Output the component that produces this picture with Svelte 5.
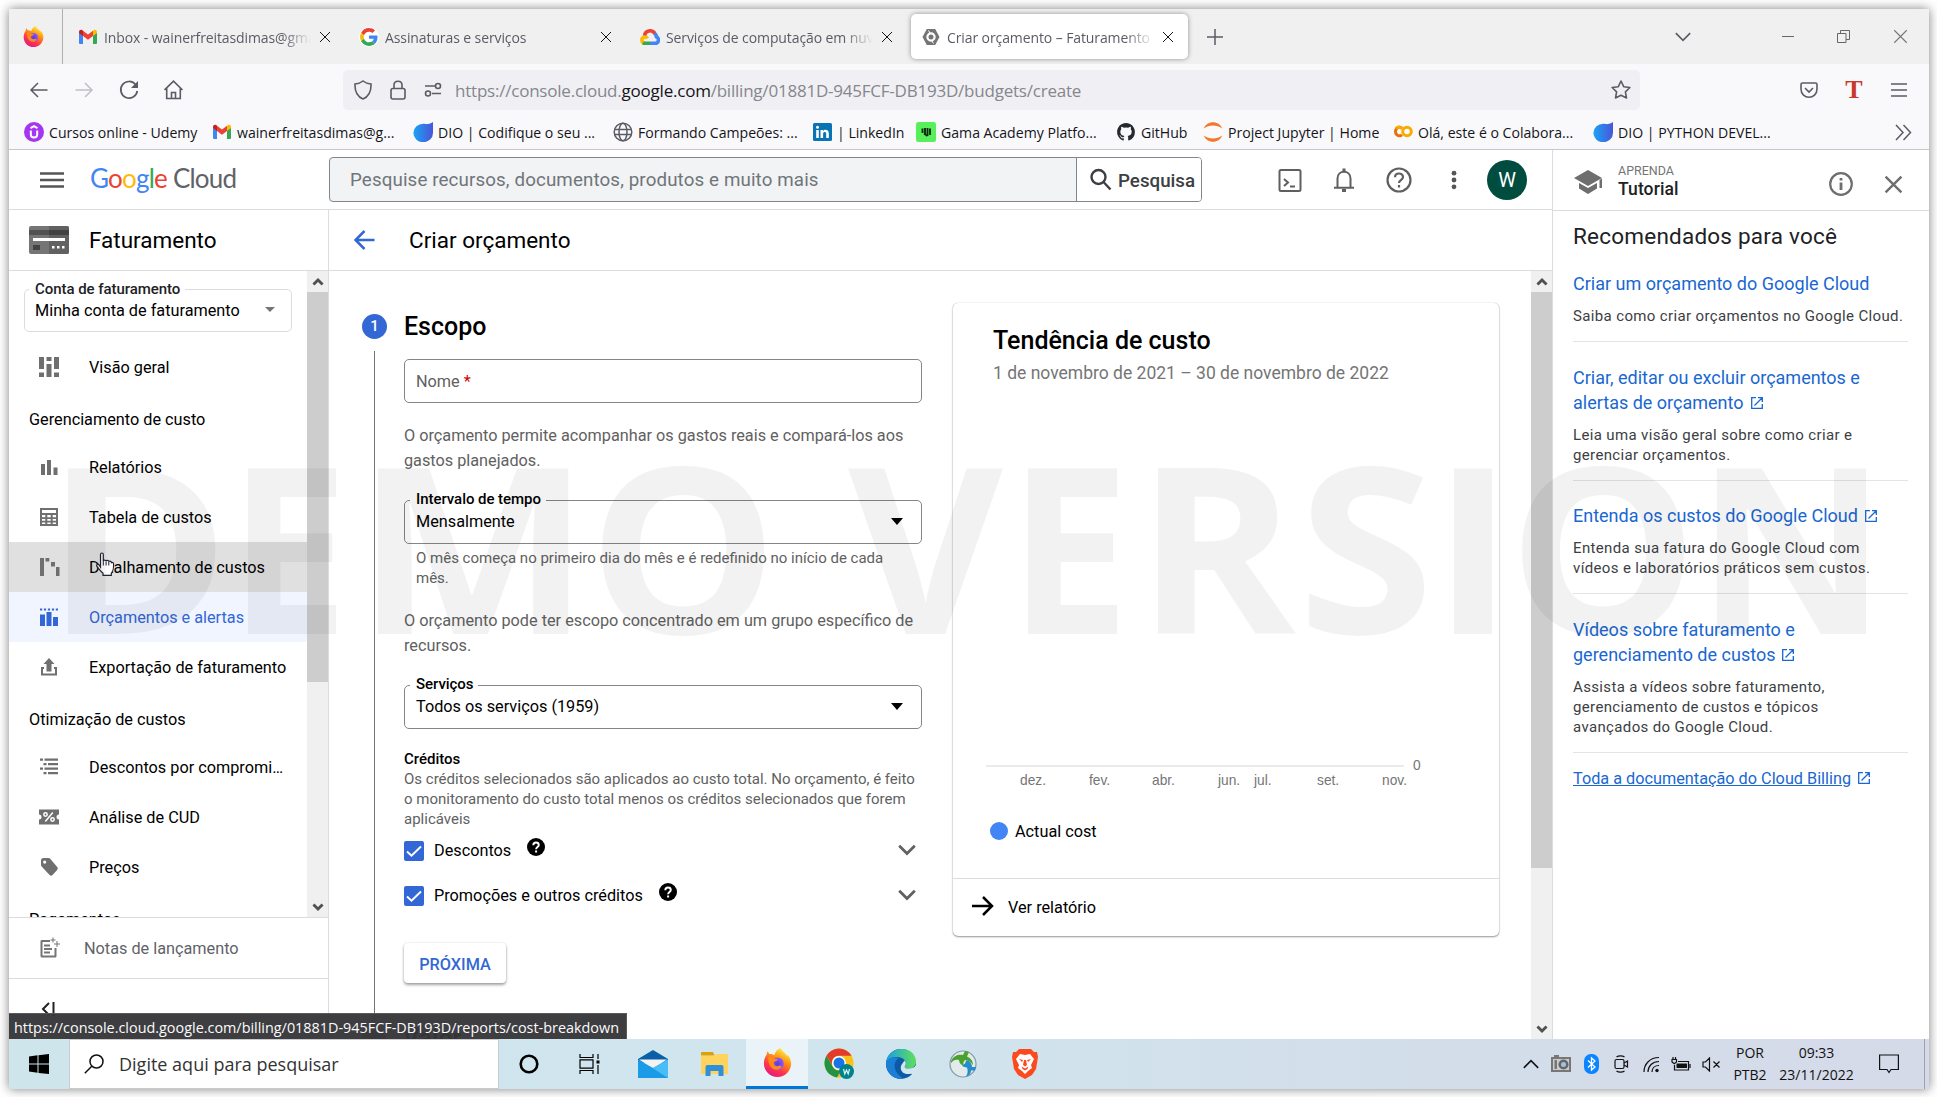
<script>
  const tabs = [
    { icon: 'gmail', title: 'Inbox - wainerfreitasdimas@gmail', active: false },
    { icon: 'google', title: 'Assinaturas e serviços', active: false },
    { icon: 'gcp', title: 'Serviços de computação em nuvem', active: false },
    { icon: 'hex', title: 'Criar orçamento – Faturamento –', active: true }
  ];

  const bookmarks = [
    ['udemy', 'Cursos online - Udemy'],
    ['gmail', 'wainerfreitasdimas@g...'],
    ['dio', 'DIO | Codifique o seu ...'],
    ['globe', 'Formando Campeões: ...'],
    ['linkedin', '| LinkedIn'],
    ['gama', 'Gama Academy Platfo...'],
    ['github', 'GitHub'],
    ['jupyter', 'Project Jupyter | Home'],
    ['colab', 'Olá, este é o Colabora...'],
    ['dio', 'DIO | PYTHON DEVEL...']
  ];

  const nav = [
    { icon: 'overview', text: 'Visão geral' },
    { heading: 'Gerenciamento de custo' },
    { icon: 'reports', text: 'Relatórios' },
    { icon: 'table', text: 'Tabela de custos' },
    { icon: 'breakdown', text: 'Detalhamento de custos', state: 'hover' },
    { icon: 'budget', text: 'Orçamentos e alertas', state: 'active' },
    { icon: 'export', text: 'Exportação de faturamento' },
    { heading: 'Otimização de custos' },
    { icon: 'commit', text: 'Descontos por compromi…' },
    { icon: 'cud', text: 'Análise de CUD' },
    { icon: 'tag', text: 'Preços' },
    { heading: 'Pagamentos' }
  ];

  const months = [
    ['dez.', 34], ['fev.', 103], ['abr.', 166], ['jun.', 232], ['jul.', 268], ['set.', 331], ['nov.', 396]
  ];

  const tutorials = [
    { lines: ['Criar um orçamento do Google Cloud'], ext: false, desc: ['Saiba como criar orçamentos no Google Cloud.'] },
    { lines: ['Criar, editar ou excluir orçamentos e', 'alertas de orçamento'], ext: true, desc: ['Leia uma visão geral sobre como criar e', 'gerenciar orçamentos.'] },
    { lines: ['Entenda os custos do Google Cloud'], ext: true, desc: ['Entenda sua fatura do Google Cloud com', 'vídeos e laboratórios práticos sem custos.'] },
    { lines: ['Vídeos sobre faturamento e', 'gerenciamento de custos'], ext: true, desc: ['Assista a vídeos sobre faturamento,', 'gerenciamento de custos e tópicos', 'avançados do Google Cloud.'] }
  ];

  // Watermark letters: left edge and drawn width in px, then the glyph's
  // side bearing, ink width and advance in font units (2048 per em).
  const MARK_SIZE = 232;
  const mark = [
    ['D', 59, 148, 184, 1217, 1516],
    ['E', 239, 99, 184, 946, 1147],
    ['M', 369, 190, 184, 1560, 1931],
    ['O', 593, 162, 119, 1394, 1632],
    ['V', 839, 155, 0, 1331, 1331],
    ['E', 1019, 100, 184, 946, 1147],
    ['R', 1149, 138, 184, 1168, 1352],
    ['S', 1300, 115, 94, 953, 1128],
    ['I', 1445, 38, 184, 310, 678],
    ['O', 1513, 162, 119, 1394, 1632],
    ['N', 1708, 149, 184, 1295, 1665]
  ].map(([ch, left, width, bearing, ink, advance]) => {
    const perUnit = width / ink;
    return { ch, x: left - bearing * perUnit, length: advance * perUnit };
  });
</script>

{#snippet firefox(size)}
  <svg width={size} height={size} viewBox="0 0 32 32">
    <defs>
      <linearGradient id="ffBody" x1=".8" y1=".05" x2=".3" y2="1">
        <stop offset="0" stop-color="#fff44f" /><stop offset=".35" stop-color="#ff980e" />
        <stop offset=".7" stop-color="#ff3647" /><stop offset="1" stop-color="#e31587" />
      </linearGradient>
      <radialGradient id="ffCore"><stop offset="0" stop-color="#5b3bd8" /><stop offset="1" stop-color="#9059ff" /></radialGradient>
    </defs>
    <path fill="url(#ffBody)" d="M19.5 0c1 3 3.500 4.500 5.500 6.500 1.200 1.200 1.600 2 1.600 2l1-.7C29.500 10.500 31 13.500 31 17c0 8.300-6.700 15-15 15S1 25.300 1 17c0-4.500 1.500-7.500 3-9.500 0-1.500.8-3.500 1.500-4.300.2 1.400.9 2.600 1.700 3.400 2.300-.3 4 .4 5.300 1.400C13.500 4 16 1 19.500 0z" />
    <circle cx="16" cy="17.500" r="7" fill="url(#ffCore)" />
    <path fill="#ff8a16" d="M6 10c3-.5 5 .5 6.500 2 1.500-.3 3 0 4 .8-1 1.700-3.500 1.700-4.500 3.200-.5 3 2 4.500 4.500 4 2-.4 3.500-.5 4 .5-1.500 3.500-6 4.500-9.500 2.500S5.500 16 6 10z" />
  </svg>
{/snippet}

{#snippet favicon(name)}
  {#if name === 'gmail'}
    <svg width="20" height="20" viewBox="0 0 20 20"><path fill="#4285f4" d="M1 5v11a1 1 0 0 0 1 1h3V8z" /><path fill="#34a853" d="M19 5v11a1 1 0 0 1-1 1h-3V8z" /><path fill="#c5221f" d="M1 5.500V5c0-1.800 2-2.800 3.400-1.700L5 3.700V9L1 6z" /><path fill="#fbbc04" d="M19 5.500V5c0-1.800-2-2.800-3.400-1.700l-.6.4V9l4-3z" /><path fill="#ea4335" d="M5 3.700l5 3.800 5-3.800V9l-5 3.800L5 9z" /></svg>
  {:else if name === 'google'}
    <svg width="20" height="20" viewBox="-3 -3 54 54"><circle cx="24" cy="24" r="27" fill="#fff" /><path fill="#ea4335" d="M24 9.500c3.500 0 6.700 1.200 9.200 3.600l6.900-6.900C35.900 2.400 30.500 0 24 0 14.600 0 6.500 5.400 2.600 13.200l8 6.200C12.400 13.700 17.700 9.500 24 9.500z" /><path fill="#4285f4" d="M47 24.600c0-1.600-.2-3.100-.4-4.600H24v9h12.900c-.6 3-2.200 5.500-4.700 7.200l7.700 6C44.400 38 47 31.800 47 24.600z" /><path fill="#fbbc05" d="M10.500 28.600a14.500 14.500 0 0 1 0-9.200l-8-6.200a24 24 0 0 0 0 21.600z" /><path fill="#34a853" d="M24 48c6.500 0 11.900-2.100 15.900-5.800l-7.700-6c-2.200 1.400-4.900 2.300-8.200 2.300-6.300 0-11.600-4.200-13.500-9.900l-8 6.200C6.500 42.600 14.600 48 24 48z" /></svg>
  {:else if name === 'gcp'}
    <svg width="20" height="20" viewBox="0 0 20 20" fill="none" stroke-width="3.600"><path stroke="#fbbc05" d="M7.500 11.500A3 3 0 1 0 5 16" /><path stroke="#34a853" d="M3 15.700c.6.400 1.300.6 2 .6h5" /><path stroke="#4285f4" d="M10 16.300h5c4 0 4.600-5 1.500-6.400C16.200 8 15 6.500 14 5.700" /><path stroke="#ea4335" d="M4.500 8.500C5.300 3.500 11.500 2 14.800 6.300" /></svg>
  {:else if name === 'hex'}
    <svg width="20" height="20" viewBox="0 0 20 20"><path fill="#757575" fill-rule="evenodd" d="M5.800 2h8.400L18.500 10l-4.300 8H5.800L1.500 10zM10 5.300a4.700 4.700 0 1 0 0 9.400 4.700 4.700 0 0 0 0-9.400z" /><circle cx="10" cy="10" r="2.500" fill="#757575" /><path stroke="#fff" stroke-width="1" d="M7.500 3.500 9 6M12.500 16.500 11 14" /></svg>
  {:else if name === 'udemy'}
    <svg width="20" height="20" viewBox="0 0 20 20"><circle cx="10" cy="10" r="10" fill="#a435f0" /><path fill="none" stroke="#fff" stroke-width="2" d="M6.800 8.500v4c0 4 6.400 4 6.400 0v-4M6.500 6.200 10 4.200l3.500 2" /></svg>
  {:else if name === 'dio'}
    <svg width="20" height="20" viewBox="0 0 20 20"><defs><linearGradient id="dio"><stop offset="0" stop-color="#1aa4f5" /><stop offset="1" stop-color="#4a55d8" /></linearGradient></defs><path fill="url(#dio)" d="M20 0v11a9.800 9.200 0 1 1-9.500-9.200c2 0 3 .6 4.500.3C17 1.700 18.500 1 20 0z" /></svg>
  {:else if name === 'globe'}
    <svg width="20" height="20" viewBox="0 0 20 20" fill="none" stroke="#5b5b66" stroke-width="1.500"><circle cx="10" cy="10" r="8.800" /><ellipse cx="10" cy="10" rx="4" ry="8.800" /><path d="M1.500 7.500h17M1.500 12.500h17" /></svg>
  {:else if name === 'linkedin'}
    <svg width="20" height="20" viewBox="0 0 20 20"><rect x="1" y="1" width="19" height="18" rx="1.500" fill="#0a73b1" /><path fill="#fff" d="M4.200 8h2.600v8H4.200zM8.500 8H11v1.200C12.300 7 16.800 7.300 16.800 11.300V16h-2.600v-4.300c0-2.400-3.100-2.200-3.100 0V16H8.500z" /><circle cx="5.500" cy="5.200" r="1.500" fill="#fff" /></svg>
  {:else if name === 'gama'}
    <svg width="20" height="20" viewBox="0 0 20 20"><rect width="20" height="20" rx="2.500" fill="#57f05a" /><path stroke="#0b2b0c" stroke-width="1.900" d="M6.500 6.500v4.500M9 6v6.500M11.500 6v8M14 6.500v6.500" /><path stroke="#0b2b0c" stroke-width="1.700" d="M8 11.500l3.500 2.500" /></svg>
  {:else if name === 'github'}
    <svg width="20" height="20" viewBox="-1 -1 18 18"><path fill="#24292f" d="M8 0C3.580 0 0 3.580 0 8c0 3.540 2.290 6.530 5.470 7.590.4.070.55-.17.55-.38 0-.19-.01-.82-.01-1.490-2.010.37-2.530-.49-2.690-.94-.09-.23-.48-.94-.82-1.130-.28-.15-.68-.52-.01-.53.63-.01 1.080.58 1.230.82.72 1.210 1.870.87 2.330.66.070-.52.28-.87.51-1.070-1.780-.2-3.640-.89-3.640-3.950 0-.87.31-1.590.82-2.150-.08-.2-.36-1.020.08-2.120 0 0 .67-.21 2.200.82a7.600 7.600 0 0 1 4 0c1.530-1.040 2.200-.82 2.200-.82.44 1.100.16 1.920.08 2.120.51.56.82 1.270.82 2.150 0 3.070-1.870 3.750-3.650 3.950.29.25.54.73.54 1.480 0 1.070-.01 1.930-.01 2.200 0 .21.15.46.55.38A8 8 0 0 0 16 8c0-4.420-3.580-8-8-8z" /></svg>
  {:else if name === 'jupyter'}
    <svg width="20" height="20" viewBox="0 0 20 20" fill="#f37726"><path d="M.8 6.500c3-8.300 15.400-8.300 18.400 0-4.800-4-13.600-4-18.400 0zM.8 13.500c3 8.300 15.400 8.300 18.400 0-4.800 4-13.600 4-18.400 0z" /></svg>
  {:else if name === 'colab'}
    <svg width="20" height="20" viewBox="0 0 20 20" fill="none" stroke-width="3"><path stroke="#e8710a" d="M9 6.300a4 4.200 0 1 0 0 6.500" /><circle cx="14" cy="9.500" r="4.300" stroke="#f9ab00" /><path stroke="#f9ab00" d="M3 6.500c1.500-1.600 3.800-1.800 6-.2" /></svg>
  {/if}
{/snippet}

{#snippet navIcon(name)}
  <svg width="24" height="24" viewBox="0 0 24 24" fill="currentColor">
    {#if name === 'overview'}
      <path d="M2 2h5v12H2zM2 17.500h5V22H2zM9.500 2h5v4h-5zM9.500 9h5v13h-5zM17 2h5v12h-5zM17 17.500h5V22h-5z" />
    {:else if name === 'reports'}
      <path d="M4 9h4v11H4zM10 5h4v15h-4zM16.500 12.500h4V20h-4z" />
    {:else if name === 'table'}
      <path fill-rule="evenodd" d="M3 3h18v18H3zM5 5v3h14V5zM5 10v2.300h3.300V10zm5.300 0v2.300h3.400V10zm5.400 0v2.300H19V10zM5 14v1.800h3.300V14zm5.300 0v1.800h3.400V14zm5.400 0v1.800H19V14zM5 17.500V19h3.300v-1.500zm5.300 0V19h3.400v-1.500zm5.400 0V19H19v-1.500z" />
    {:else if name === 'breakdown'}
      <path d="M3 3h4v18H3zM8.500 3h3.800v3.500H8.500zM14 7h4v4.500h-4zM19 12h3.500v9H19z" />
    {:else if name === 'budget'}
      <path d="M3 9.500h5V21H3zM9.500 7h5v14h-5zM16 12h5v9h-5zM3 3.500h2.200v2H3zM6.900 3.500h2.200v2H6.900zM10.900 3.500h2.200v2h-2.200zM14.900 3.500h2.200v2h-2.200zM18.800 3.500H21v2h-2.200z" />
    {:else if name === 'export'}
      <path d="M12 3l5.500 6H14.500v7.500h-5V9H6.500zM4 12h3v2H6v4.500h12V14h-1v-2h3v8.500H4z" />
    {:else if name === 'commit'}
      <path d="M3 3.500h3v2.200H3zM7.500 3.500H21v2.200H7.500zM6.500 8h3v2.200h-3zM11 8h10v2.200H11zM3 12.500h3v2.200H3zM7.500 12.500H21v2.200H7.500zM6.500 17h3v2.200h-3zM11 17h10v2.200H11z" />
    {:else if name === 'cud'}
      <path d="M2 4.500h20v5a2.500 2.500 0 0 0 0 5v5H2v-5a2.500 2.500 0 0 0 0-5z" />
      <g fill="none" stroke="#fff" stroke-width="1.500"><circle cx="8.500" cy="9.500" r="1.700" /><circle cx="15.500" cy="14.500" r="1.700" /><path d="M15.800 7.500l-7.500 9" /></g>
    {:else if name === 'tag'}
      <path fill-rule="evenodd" d="M4 5.500C4 4 5 3 6.500 3h5c.7 0 1.300.3 1.700.8l7 8.200c.8 1 .7 2.200-.1 3l-4.600 5c-.8.900-2 .9-2.900 0l-8-8.600c-.4-.4-.6-1-.6-1.600zM7.700 5.500a1.600 1.600 0 1 0 0 3.200 1.600 1.600 0 0 0 0-3.200z" />
    {:else if name === 'notes'}
      <path fill-rule="evenodd" d="M5 4h8v2H5.500v13.500h12V12h2v8c0 1-.7 1.500-1.500 1.500H5c-1 0-1.500-.7-1.500-1.500V5.500C3.500 4.700 4 4 5 4zM7 8.500h6v1.900H7zM7 12h8v1.900H7zM7 15.500h6v1.900H7zM15.500 1.500h1v2h2v1h-2v2h-1v-2h-2v-1h2zM19.500 5h1v2.500H23v1h-2.500V11h-1V8.500H17v-1h2.500z" />
    {/if}
  </svg>
{/snippet}

{#snippet chevron(dir, size, color, weight)}
  <svg width={size} height={size} viewBox="0 0 20 20" fill="none" stroke={color} stroke-width={weight}>
    {#if dir === 'up'}<path d="M3.500 13.500 10 7l6.500 6.500" />{:else}<path d="M3.500 6.500 10 13l6.500-6.500" />{/if}
  </svg>
{/snippet}

{#snippet cross(size, color, weight)}
  <svg width={size} height={size} viewBox="0 0 12 12" stroke={color} stroke-width={weight}><path d="M1 1l10 10M11 1 1 11" /></svg>
{/snippet}

{#snippet external()}
  <svg class="ext" width="12" height="12" viewBox="0 0 12 12" fill="none" stroke="#1967d2" stroke-width="1.300"><path d="M5 .7H.7v10.600h10.600V7M7 .7h4.300V5M11 1 3.500 8.500" /></svg>
{/snippet}

{#snippet helpDot()}
  <svg width="18" height="18" viewBox="0 0 18 18"><circle cx="9" cy="9" r="9" fill="#000" /><path fill="none" stroke="#fff" stroke-width="1.900" d="M6.300 7.200C6.300 3.600 11.800 3.800 11.800 7c0 2-2.700 2.200-2.700 4.300" /><path fill="#fff" d="M8.100 12.500h2v2h-2z" /></svg>
{/snippet}

{#snippet scrollArrow(dir)}
  <div class="sb-btn">{@render chevron(dir, 14, '#505050', 4)}</div>
{/snippet}

<div class="window">
  <div class="tabstrip">
    <div class="pinned">{@render firefox(21)}</div>
    {#each tabs as tab}
      <div class="tab" class:active={tab.active}>
        {@render favicon(tab.icon)}
        <span class="tab-title">{tab.title}</span>
        {@render cross(12, '#15141a', 1)}
      </div>
    {/each}
    <svg class="plus" width="16" height="16" viewBox="0 0 16 16" stroke="#5b5b66" stroke-width="1.500"><path d="M8 0v16M0 8h16" /></svg>
    <div class="wincontrols">
      {@render chevron('down', 22, '#5b5b66', 1.500)}
      <svg width="12" height="12" viewBox="0 0 12 12" stroke="#666"><path d="M0 5.500h12" /></svg>
      <svg width="13" height="13" viewBox="0 0 13 13" stroke="#666" fill="none"><path d="M.5 3.500h8.500v9H.5zM3.500 3.500v-3h9v9H9" /></svg>
      {@render cross(15, '#777', 0.900)}
    </div>
  </div>

  <div class="navbar">
    <div class="nav-buttons">
      <svg width="20" height="20" viewBox="0 0 20 20" fill="none" stroke="#5b5b66" stroke-width="1.500"><path d="M18.500 10H2M9 3l-7 7 7 7" /></svg>
      <svg width="20" height="20" viewBox="0 0 20 20" fill="none" stroke="#bfbfc5" stroke-width="1.500"><path d="M1.500 10H18M11 3l7 7-7 7" /></svg>
      <svg width="20" height="20" viewBox="0 0 20 20" fill="none" stroke="#5b5b66" stroke-width="1.700"><path d="M16.500 4.500A8.300 8.300 0 1 0 18.300 11" /><path fill="#5b5b66" stroke="none" d="M19 1v7h-7z" /></svg>
      <svg width="20" height="20" viewBox="0 0 20 20" fill="none" stroke="#5b5b66" stroke-width="1.600"><path d="M.5 10l9-8.800 9 8.800M2.700 8v10.500h13.600V8M7.500 18v-5.500h4V18" /></svg>
    </div>
    <div class="urlbar">
      <svg width="20" height="20" viewBox="0 0 20 20" fill="none" stroke="#5b5b66" stroke-width="1.600"><path d="M10 1c2.500 2 5 2.800 8 3 .3 7-2 12.500-8 15C4 16.500 1.700 11 2 4c3-.2 5.500-1 8-3z" /></svg>
      <svg width="20" height="20" viewBox="0 0 20 20" fill="none" stroke="#5b5b66" stroke-width="1.600"><rect x="3" y="8.500" width="14" height="10.500" rx="2" /><path d="M6 8.500V5c0-5 8-5 8 0v3.500" /></svg>
      <svg width="20" height="20" viewBox="0 0 20 20" fill="none" stroke="#5b5b66" stroke-width="1.600"><path d="M2 6h10M9 13.500h9" /><circle cx="15" cy="6" r="2.500" /><circle cx="5" cy="13.500" r="2.500" /></svg>
      <span class="url">https://console.cloud.<b>google.com</b>/billing/01881D-945FCF-DB193D/budgets/create</span>
      <svg width="20" height="20" viewBox="0 0 20 20" fill="none" stroke="#5b5b66" stroke-width="1.600" stroke-linejoin="round"><path d="M10 1l2.700 5.700 6.200.8-4.500 4.300 1.100 6.200L10 15.200 4.500 18l1.100-6.200L1.100 7.500l6.200-.8z" /></svg>
    </div>
    <div class="nav-right">
      <svg width="18" height="18" viewBox="0 0 18 18" fill="none" stroke="#5b5b66" stroke-width="1.600"><path d="M2.500 2h13c.8 0 1.500.6 1.500 1.500V8c0 11-16 11-16 0V3.500C1 2.600 1.700 2 2.500 2zM5 7l4 4 4-4" /></svg>
      <span class="tee">T</span>
      <svg width="16" height="14" viewBox="0 0 16 14" stroke="#5b5b66" stroke-width="1.500"><path d="M0 1h16M0 7h16M0 13h16" /></svg>
    </div>
  </div>

  <div class="bookmarks">
    {#each bookmarks as [icon, label]}
      <div class="bookmark">{@render favicon(icon)}<span>{label}</span></div>
    {/each}
    <svg class="more" width="17" height="17" viewBox="0 0 17 17" fill="none" stroke="#5b5b66" stroke-width="1.500"><path d="M1 1l7 7.500L1 16M8.500 1l7 7.500-7 7.500" /></svg>
  </div>

  <div class="page">
    <div class="console">
      <header class="topbar">
        <svg class="burger" width="24" height="16" viewBox="0 0 24 16" stroke="#555" stroke-width="2.400"><path d="M0 1.500h24M0 8h24M0 14.500h24" /></svg>
        <div class="logo"><span class="b">G</span><span class="r">o</span><span class="y">o</span><span class="b">g</span><span class="g">l</span><span class="r">e</span><span class="cloud">Cloud</span></div>
        <div class="search">
          <span class="placeholder">Pesquise recursos, documentos, produtos e muito mais</span>
          <div class="search-btn">
            <svg width="24" height="24" viewBox="0 0 24 24" fill="none" stroke="#3c4043" stroke-width="2.400"><circle cx="9.500" cy="9" r="7" /><path d="M14.500 14l7 7.500" /></svg>
            <span>Pesquisa</span>
          </div>
        </div>
        <div class="top-icons">
          <svg width="24" height="24" viewBox="0 0 24 24" fill="none" stroke="#5f5f5f" stroke-width="2"><rect x="1.500" y="2" width="21" height="21" rx="1.500" /><path d="M6 11l4 3.500L6 18M12 18.500h5" /></svg>
          <svg width="24" height="24" viewBox="0 0 24 24" fill="none" stroke="#5f5f5f" stroke-width="2"><path d="M5.500 19.500v-9c0-9 13-9 13 0v9M2 19.800h20" /><path stroke-width="3" d="M12 .5v3M10 22.500h4" /></svg>
          <svg width="26" height="26" viewBox="0 0 26 26" fill="none" stroke="#5f5f5f" stroke-width="2.200"><circle cx="13" cy="13" r="11.500" /><path d="M9 10.300c0-5 8-5 8-.3 0 3-4 3.200-4 6" /><path d="M13 18v2.500" /></svg>
          <svg width="24" height="24" viewBox="0 0 24 24" fill="#555"><circle cx="12" cy="5.200" r="2.400" /><circle cx="12" cy="12" r="2.400" /><circle cx="12" cy="18.800" r="2.400" /></svg>
          <div class="avatar">W</div>
        </div>
      </header>

      <div class="body">
        <aside class="sidebar">
          <div class="side-head">
            <svg width="40" height="28" viewBox="0 0 40 28"><rect width="40" height="28" rx="2" fill="#757575" /><path fill="#616161" d="M20 0h18a2 2 0 0 1 2 2v24a2 2 0 0 1-2 2H20z" /><path fill="#525252" d="M0 4h20v5H0z" /><path fill="#424242" d="M20 4h20v5H20zM4 19h7v5H4z" /><path fill="#fff" d="M4 12h32v3H4zM23 20h2.500v2.500H23zM28 20h2.500v2.500H28zM33 20h2.500v2.500H33z" /></svg>
            <span>Faturamento</span>
          </div>
          <div class="side-scroll">
            <div class="side-list">
              <fieldset class="account">
                <legend>Conta de faturamento</legend>
                <div class="field-value">Minha conta de faturamento<i class="caret small"></i></div>
              </fieldset>
              {#each nav as item}
                {#if item.heading}
                  <div class="nav-heading">{item.heading}</div>
                {:else}
                  <div class="nav-item {item.state ?? ''}">{@render navIcon(item.icon)}<span>{item.text}</span></div>
                {/if}
              {/each}
            </div>
            <div class="scrollbar">
              {@render scrollArrow('up')}
              <div class="thumb side"></div>
              {@render scrollArrow('down')}
            </div>
          </div>
          <div class="notes">{@render navIcon('notes')}<span>Notas de lançamento</span></div>
          <div class="collapse">
            <svg width="14" height="16" viewBox="0 0 14 16" fill="none" stroke="#222" stroke-width="2"><path d="M8 2 2 8l6 6M12.500 1v14" /></svg>
          </div>
        </aside>

        <section class="main">
          <div class="main-head">
            <svg width="22" height="20" viewBox="0 0 22 20" fill="none" stroke="#3367d6" stroke-width="2.500"><path d="M20.500 10H1.500M10.500 1l-9 9 9 9" /></svg>
            <span>Criar orçamento</span>
          </div>
          <div class="main-scroll">
            <div class="steps">
              <div class="rail"><div class="badge">1</div><div class="line"></div></div>
              <div class="form">
                <h2>Escopo</h2>
                <div class="input">Nome&nbsp;<em>*</em></div>
                <p class="para first">O orçamento permite acompanhar os gastos reais e compará-los aos<br />gastos planejados.</p>
                <fieldset class="select">
                  <legend>Intervalo de tempo</legend>
                  <div class="field-value">Mensalmente<i class="caret"></i></div>
                </fieldset>
                <p class="hint">O mês começa no primeiro dia do mês e é redefinido no início de cada<br />mês.</p>
                <p class="para second">O orçamento pode ter escopo concentrado em um grupo específico de<br />recursos.</p>
                <fieldset class="select">
                  <legend>Serviços</legend>
                  <div class="field-value">Todos os serviços (1959)<i class="caret"></i></div>
                </fieldset>
                <h3>Créditos</h3>
                <p class="credits">Os créditos selecionados são aplicados ao custo total. No orçamento, é feito<br />o monitoramento do custo total menos os créditos selecionados que forem<br />aplicáveis</p>
                <div class="checks">
                  {#each ['Descontos', 'Promoções e outros créditos'] as label}
                    <div class="check-row">
                      <svg width="20" height="20" viewBox="0 0 20 20"><rect width="20" height="20" rx="2" fill="#3367d6" /><path fill="none" stroke="#fff" stroke-width="1.900" d="M3 10.500l4.500 4.300L17 5.500" /></svg>
                      <span>{label}</span>
                      <div class="help">{@render helpDot()}</div>
                      <div class="expand">{@render chevron('down', 24, '#616161', 2.300)}</div>
                    </div>
                  {/each}
                </div>
                <button>PRÓXIMA</button>
              </div>
            </div>

            <div class="card">
              <h2>Tendência de custo</h2>
              <div class="period">1 de novembro de 2021 – 30 de novembro de 2022</div>
              <div class="chart">
                <div class="axis"><div class="axis-line"></div><span>0</span></div>
                <div class="ticks">
                  {#each months as [m, x]}<span class="tick" style="left: {x}px">{m}</span>{/each}
                </div>
              </div>
              <div class="legend"><i></i>Actual cost</div>
              <div class="report">
                <svg width="22" height="20" viewBox="0 0 22 20" fill="none" stroke="#000" stroke-width="2.500"><path d="M0 10h19M11 1l9 9-9 9" /></svg>
                <span>Ver relatório</span>
              </div>
            </div>

            <div class="scrollbar main-sb">
              {@render scrollArrow('up')}
              <div class="thumb content"></div>
              {@render scrollArrow('down')}
            </div>
          </div>
        </section>
      </div>
    </div>

    <aside class="learn">
      <div class="learn-head">
        <svg width="28" height="24" viewBox="0 0 28 24" fill="#6e6e6e"><path d="M14 0 28 8 14 16 0 8zM5 13l9 5 9-5v5.500L14 24l-9-5.500zM25.500 10 28 8.500V18h-2.500z" /></svg>
        <div class="learn-title"><small>APRENDA</small><strong>Tutorial</strong></div>
        <svg class="info" width="24" height="24" viewBox="0 0 24 24" fill="none" stroke="#6e6e6e" stroke-width="2.200"><circle cx="12" cy="12" r="10.800" /><path stroke-width="2.800" d="M12 10.500V18M12 6v2.500" /></svg>
        <div class="close">{@render cross(19, '#6e6e6e', 1.500)}</div>
      </div>
      <h2>Recomendados para você</h2>
      {#each tutorials as t}
        <div class="tut">
          <a href="#top">{#each t.lines as line, i}{#if i}<br />{/if}{line}{/each}{#if t.ext}{@render external()}{/if}</a>
          <p>{#each t.desc as line, i}{#if i}<br />{/if}{line}{/each}</p>
        </div>
      {/each}
      <div class="docs"><a href="#docs">Toda a documentação do Cloud Billing</a>{@render external()}</div>
    </aside>

    <div class="next-step"><i></i><span>Valor</span></div>
    <div class="status">https://console.cloud.google.com/billing/01881D-945FCF-DB193D/reports/cost-breakdown</div>
    <svg class="cursor" width="20" height="25" viewBox="0 0 20 25"><path fill="#fff" stroke="#223" stroke-width="1.200" d="M5.500 15V2.500c0-2 2.800-2 2.800 0V9c0-1.200 2.600-1.300 2.800.3 0-1.200 2.500-1.200 2.700.5.200-1.200 2.600-1 2.600.8 1.400-.5 2.200.3 2.200 1.500 0 6-.6 7-2.300 9.200v2H8v-2C6 19.500 4.500 17.500 2 14.500c-1.200-1.500.8-3 2-1.700z" /><path stroke="#223" d="M8.300 9v4.500M11.100 9.500v4M13.800 10v3.500" /></svg>
  </div>

  <footer class="taskbar">
    <div class="start"><svg width="20" height="20" viewBox="0 0 20 20"><path d="M0 2.500 8.500 1.300V9.500H0zM9.500 1.200 20 0v9.500H9.500zM0 10.500h8.500v8.300L0 17.500zM9.500 10.500H20V20L9.500 18.900z" /></svg></div>
    <div class="tb-search">
      <svg width="20" height="20" viewBox="0 0 20 20" fill="none" stroke="#111" stroke-width="1.500"><circle cx="12.500" cy="7.500" r="6.500" /><path d="M8 12 .8 19.200" /></svg>
      <span>Digite aqui para pesquisar</span>
    </div>
    <div class="apps">
      <div class="app"><svg width="20" height="20" viewBox="0 0 20 20"><circle cx="10" cy="10" r="8.300" fill="none" stroke="#000" stroke-width="2.600" /></svg></div>
      <div class="app taskview"><svg width="21" height="20" viewBox="0 0 21 20" fill="none" stroke="#000" stroke-width="1.200"><path d="M1 0v3.500h13V0M1 20v-3.500h13V20M1 5.800h13v8.400H1zM19 0v5M19 11v9" /><path fill="#000" stroke="none" d="M17.500 6.500h3v3h-3z" /></svg></div>
      <div class="app"><svg width="30" height="28" viewBox="0 0 30 28"><path fill="#0a5fa8" d="M15 0 30 9v4H0V9z" /><path fill="#f3f3f3" d="M1 9.500h28L15 19z" /><path fill="#1a9be8" d="M0 9.500 15 18l15-8.500V28H0z" /><path fill="#49bdf5" d="M30 9.500V28L12 16.500l3 1.500z" /></svg></div>
      <div class="app"><svg width="28" height="24" viewBox="0 0 28 24"><path fill="#e0a100" d="M0 1a1 1 0 0 1 1-1h11l1.500 3.500H0z" /><path fill="#ffd45e" d="M0 4h13l2-2h12v20H0z" /><path fill="#2f8fd8" d="M4.500 24v-9a2 2 0 0 1 2-2h14a2 2 0 0 1 2 2v9h-5v-5h-8v5z" /></svg></div>
      <div class="app current">{@render firefox(29)}</div>
      <div class="app"><svg width="32" height="32" viewBox="0 0 32 32"><circle cx="16" cy="15" r="14.500" fill="#fbc116" /><path fill="#e33b2e" d="M3.500 7.700a14.500 14.500 0 0 1 25 0H16a7 7 0 0 0-6.500 10z" /><path fill="#229342" d="M3.500 7.700l6.300 11A7 7 0 0 0 18 22l-4 7.500A14.500 14.500 0 0 1 3.500 7.700z" /><circle cx="16" cy="15" r="7" fill="#fff" /><circle cx="16" cy="15" r="5.500" fill="#1a73e8" /><circle cx="23.500" cy="23.500" r="7.500" fill="#00838f" /><path fill="none" stroke="#d8f3f3" stroke-width="1.200" d="M20.500 21l1.300 5 1.700-4 1.700 4 1.300-5" /></svg></div>
      <div class="app"><svg width="30" height="30" viewBox="0 0 30 30"><defs><linearGradient id="edgeTop"><stop offset="0" stop-color="#1b9de2" /><stop offset="1" stop-color="#5fe05a" /></linearGradient></defs><circle cx="15" cy="15" r="15" fill="#0c59a4" /><path fill="url(#edgeTop)" d="M0 14C1-4 30-5 30 13c0 6-7 8-11 6-1-1 1-2 1-4.500C20 7 4 5 0 14z" /><path fill="#1b7fd6" d="M0 14c2-5 8-7 13-5-6 3-6 13 1 18 1 1 3 2 3 2.800C8 31 0 24 0 14z" /><path fill="#d3e6ee" d="M18.500 11.500c2 2 1.500 4.500.3 6-.8 1.500 3 3.500 9.700.5l1.500-2 1 8-3 1.500c-1 .3-1.500-.8-3-.8-8 2-12-4-9.500-9z" /></svg></div>
      <div class="app"><svg width="28" height="28" viewBox="0 0 28 28"><circle cx="14" cy="14" r="13" fill="#e3eaec" stroke="#809aa8" stroke-width="1.200" /><path fill="#49a22b" d="M2 11C5 5 10 4 14 5l2-4 4 1-2 4.500c4 1.500 6 5 6 8.500-2-3-5-5-8-5-2 2-2 4-1 6-3-1-5-3-5-6-3-1-6 0-8 3z" /><path fill="#238cc9" d="M17 10c4 1 6 4 6 7h4l-1 3.500h-4c0 3-2 5.500-5 6 2-3 2-6 1-9-2 0-4-1-5-2 3-1 4-3 4-5.500z" /></svg></div>
      <div class="app"><svg width="26" height="30" viewBox="0 0 26 30"><path fill="#fb4b1e" d="M7 0h12l3 3 3 0 1 5-2 12-4 6-7 4-7-4-4-6L0 8l1-5h3z" /><path fill="#fff" d="M8 5l5 1 5-1 4 5-3 6 1 3-4 3-3 3-3-3-4-3 1-3-3-6z" /><path fill="#fb4b1e" d="M7 10l4 1-1 2zM19 10l-4 1 1 2zM12 11h2l1 5-2 1.500-2-1.500zM9.500 17.500l3.500 2 3.500-2-1 2.500-2.500 1.500-2.500-1.500z" /></svg></div>
    </div>
    <div class="tray">
      {@render chevron('up', 22, '#111', 1.400)}
      <svg width="20" height="18" viewBox="0 0 20 18"><path fill="#777" d="M0 2h3V0h5v2h12v15H0z" /><path fill="#ccc" d="M2 4h16v11H2z" /><path fill="#777" d="M3.500 5H6v9H3.500z" /><circle cx="12.500" cy="9.500" r="5" fill="#666" /><circle cx="12.500" cy="9.500" r="2.500" fill="#9cc4e6" /></svg>
      <svg width="15" height="20" viewBox="0 0 15 20"><rect width="15" height="20" rx="7" fill="#0a84ff" /><path fill="none" stroke="#fff" stroke-width="1.300" d="M4 6.500l7 6.500-3.500 3V4L11 7l-7 6.500" /></svg>
      <svg width="15" height="18" viewBox="0 0 15 18" fill="none" stroke="#111" stroke-width="1.200"><rect x="1" y="4.500" width="9" height="9" rx="1.500" /><path d="M10 8l3.500-2v6L10 10M2.500 2c2-1.500 6-1.500 8 0M2.500 16c2 1.500 6 1.500 8 0" /></svg>
      <svg width="17" height="17" viewBox="0 0 17 17" fill="none" stroke="#111" stroke-width="1.200"><path d="M1 16C1 8 7 1.500 16 1.500M5 16C5 10 9.500 5.500 16 5.500M9 16c0-4 3-6.500 7-6.500" /><circle cx="14" cy="14.500" r="1.700" fill="#111" stroke="none" /></svg>
      <svg width="20" height="15" viewBox="0 0 20 15" fill="none" stroke="#111" stroke-width="1.200"><path d="M7 4.500h10.500v8.500H3.500V8M19 7v4" /><path fill="#111" stroke="none" d="M5.500 6.500H16V11H5.500z" /><path d="M1 2.500h4.500V5L3.200 6.800 1 5zM2 0v2.500M4.500 0v2.500" /></svg>
      <svg width="19" height="15" viewBox="0 0 19 15" fill="none" stroke="#111" stroke-width="1.200"><path d="M1 5h2.500L7.500 1v13l-4-4H1zM11.500 4.500l6 6M17.500 4.500l-6 6" /></svg>
    </div>
    <div class="lang">POR<br />PTB2</div>
    <div class="clock">09:33<br />23/11/2022</div>
    <svg class="notif" width="20" height="20" viewBox="0 0 20 20" fill="none" stroke="#111" stroke-width="1.200"><path d="M.6 1h18.800v14.500H12l-2 3-2-3H.6z" /></svg>
    <div class="peek"></div>
  </footer>

  <svg class="watermark" width="1920" height="240" viewBox="0 0 1920 240">
    <text y="203" font-size={MARK_SIZE}>{#each mark as m}<tspan x={m.x} textLength={m.length} lengthAdjust="spacingAndGlyphs">{m.ch}</tspan>{/each}</text>
  </svg>
</div>

<style>
  :global(body) { margin: 0; background: #fff; }
  :global(#app) { padding: 9px; width: 1937px; height: 1097px; box-sizing: border-box; overflow: hidden; }
  * { box-sizing: border-box; }
  svg { flex: none; display: block; }
  h2, h3, p { margin: 0; }

  .window {
    position: relative;
    width: 1920px;
    height: 1080px;
    display: flex;
    flex-direction: column;
    background: #fff;
    box-shadow: 0 0 10px rgba(0, 0, 0, 0.5);
    font-family: Roboto, sans-serif;
    font-size: 16.25px;
    color: #000;
    white-space: nowrap;
  }

  /* browser chrome */
  .tabstrip, .navbar, .bookmarks, .status, .taskbar { font-family: 'Open Sans', 'Noto Sans', sans-serif; }
  .tabstrip { height: 55px; flex: none; display: flex; align-items: center; background: #f0f0f0; }
  .pinned { width: 54px; height: 55px; margin-right: 3px; padding-left: 14px; display: flex; align-items: center; border-right: 1px solid #b0b0b4; }
  .tab { width: 277px; height: 45px; margin: 0 2px; padding: 0 14px 0 10px; display: flex; align-items: center; border-radius: 5px; font-size: 14px; letter-spacing: -0.1px; color: #5b5b66; }
  .tab.active { background: #fff; box-shadow: 0 0 5px rgba(0, 0, 0, 0.4); }
  .tab-title { flex: 1; margin: 2px 8px 0 6px; overflow: hidden; mask-image: linear-gradient(90deg, #000 86%, transparent); }
  .plus { margin-left: 17px; }
  .wincontrols { margin-left: auto; width: 240px; margin-right: 23px; display: flex; align-items: center; gap: 43px; padding-left: 6px; }
  .wincontrols > :global(:first-child) { margin-right: 45px; }
  .navbar { height: 51px; flex: none; display: flex; align-items: center; background: #f9f9fb; }
  .nav-buttons { width: 334px; padding-left: 20px; display: flex; gap: 25px; }
  .urlbar { width: 1297px; height: 40px; padding: 0 9px 0 10px; display: flex; align-items: center; gap: 15px; border-radius: 5px; background: #f0f0f4; }
  .url { flex: 1; margin-left: -3px; padding-top: 2px; font-size: 17px; letter-spacing: -0.22px; color: #86868d; }
  .url b { font-weight: 400; color: #15141a; }
  .nav-right { flex: 1; display: flex; align-items: center; justify-content: flex-end; padding-right: 22px; }
  .tee { width: 38px; margin: 0 18px 0 17px; text-align: center; font: 700 26px/26px 'Liberation Serif', serif; color: #c8392b; }
  .bookmarks { height: 35px; flex: none; display: grid; grid-template-columns: 188px 201px 200px 199px 104px 200px 87px 190px 200px 302px 20px; align-items: center; padding: 0 0 0 15px; background: #f9f9fb; border-bottom: 1px solid #c8c8ca; font-size: 14.100px; color: #15141a; }
  .bookmark { display: flex; align-items: center; gap: 5px; }

  /* page */
  .page { position: relative; height: 889px; flex: none; display: flex; overflow: hidden; }
  .console { width: 1543px; display: flex; flex-direction: column; }
  .topbar { height: 60px; flex: none; display: flex; align-items: center; border-bottom: 1px solid #dadce0; }
  .burger { margin-left: 31px; }
  .logo { width: 147px; margin: -3px 92px 0 26px; font: 26px/30px Lato, sans-serif; letter-spacing: -0.8px; }
  .logo .b { color: #4285f4; } .logo .r { color: #ea4335; } .logo .y { color: #fbbc04; } .logo .g { color: #34a853; }
  .logo .cloud { margin-left: 6px; color: #5f6368; }
  .search { width: 873px; height: 45px; display: flex; align-items: center; border: 1px solid #80868b; border-radius: 4px; background: #f1f3f4; overflow: hidden; }
  .placeholder { flex: 1; padding-left: 20px; font-size: 18.750px; letter-spacing: 0.12px; color: #70757a; }
  .search-btn { width: 125px; height: 43px; padding-left: 12px; display: flex; align-items: center; gap: 5px; background: #fff; border-left: 1px solid #80868b; font-size: 18.750px; font-weight: 500; color: #3c4043; }
  .search-btn span { margin-top: 2px; }
  .top-icons { display: flex; align-items: center; gap: 30px; margin-left: 76px; }
  .avatar { width: 40px; height: 40px; margin-left: -9px; border-radius: 50%; background: #004d40; color: #fff; font-size: 20px; line-height: 41px; text-align: center; }
  .body { flex: 1; min-height: 0; display: flex; }

  .sidebar { width: 320px; flex: none; display: flex; flex-direction: column; border-right: 1px solid #dadce0; }
  .side-head, .main-head { height: 61px; flex: none; display: flex; align-items: center; border-bottom: 1px solid #dadce0; font-size: 22.500px; }
  .side-head { padding-left: 20px; gap: 20px; }
  .side-scroll { height: 646px; flex: none; display: flex; overflow: hidden; }
  .side-list { flex: 1; min-width: 0; }
  fieldset { margin: 0; padding: 0; border: 1px solid #80868b; border-radius: 5px; min-width: 0; }
  legend { height: 16px; margin-left: 5px; padding: 0 5px 0 6px; font-size: 15px; font-weight: 500; line-height: 15px; letter-spacing: -0.05px; }
  .field-value { display: flex; align-items: center; justify-content: space-between; height: 27px; padding: 0 16px 0 11px; }
  .account { width: 268px; margin: 10px 0 10px 15px; height: 51px; border-color: #dadce0; }
  .account legend { margin-left: 4px; line-height: 17px; color: #202124; }
  .account .field-value { padding-left: 10px; }
  .caret { border: 6.500px solid transparent; border-top: 7px solid #000; border-bottom: 0; }
  .caret.small { border-width: 5px 5px 0; border-top-color: #757575; margin-top: -2px; }
  .nav-item { height: 50px; padding-left: 28px; display: flex; align-items: center; gap: 28px; }
  .nav-item > :global(svg) { color: #6f6f6f; }
  .nav-item.hover { background: #e0e0e0; }
  .nav-item.active { background: #f0f5ff; color: #3367d6; }
  .nav-item.active > :global(svg) { color: #3367d6; }
  .nav-heading { height: 50px; padding: 5px 0 0 20px; line-height: 46px; }
  .scrollbar { width: 21px; flex: none; display: flex; flex-direction: column; justify-content: space-between; background: #f0f0f0; }
  .sb-btn { height: 21px; display: flex; align-items: center; justify-content: center; }
  .thumb { background: #cdcdcd; margin-bottom: auto; }
  .thumb.side { height: 390px; }
  .thumb.content { height: 576px; }
  .notes { height: 62px; flex: none; padding-left: 28px; display: flex; align-items: center; gap: 23px; border-top: 1px solid #dadce0; border-bottom: 1px solid #dadce0; color: #5f6368; }
  .notes > :global(svg) { color: #757575; }
  .collapse { padding: 22px 0 0 32px; }

  .main { flex: 1; display: flex; flex-direction: column; min-width: 0; }
  .main-head { padding-left: 25px; gap: 33px; }
  .main-scroll { flex: 1; min-height: 0; display: flex; align-items: flex-start; }
  .steps { width: 593px; height: 768px; padding: 43px 0 0 33px; display: flex; gap: 17px; }
  .rail { width: 25px; display: flex; flex-direction: column; align-items: center; }
  .badge { width: 25px; height: 25px; border-radius: 50%; background: #3367d6; color: #fff; text-align: center; font-size: 15px; font-weight: 500; line-height: 25px; }
  .line { flex: 1; width: 1px; margin-top: 12px; background: #757575; }
  .form { width: 518px; }
  h2 { font-size: 25px; font-weight: 500; line-height: 30px; }
  .form h2 { margin: -2px 0 17px; }
  .input { height: 44px; padding-left: 11px; border: 1px solid #80868b; border-radius: 5px; line-height: 43px; color: #616161; }
  .input em { font-style: normal; color: #d50000; }
  .para { line-height: 25px; color: #616161; }
  .first { margin: 20px 0 19px; }
  .select { height: 52px; }
  .form .field-value { padding-right: 18px; }
  .hint { margin: 4px 0 20px; padding-left: 12px; font-size: 15px; line-height: 20px; color: #616161; }
  .second { margin-bottom: 19px; }
  h3 { margin-top: 20px; font-size: 15px; font-weight: 500; line-height: 20px; }
  .credits { font-size: 15px; line-height: 20px; color: #616161; }
  .checks { margin-top: -1px; }
  .check-row { height: 45px; display: flex; align-items: center; }
  .check-row span { margin-left: 10px; }
  .help { margin: -7px 0 0 16px; }
  .expand { margin: -2px 3px 0 auto; }
  button { display: block; width: 102px; height: 40px; margin-top: 25px; padding: 2px 0 0; border: 0; border-radius: 4px; background: #fff; box-shadow: 0 2px 3px rgba(0, 0, 0, 0.35), 0 0 2px rgba(0, 0, 0, 0.15); font: 500 16.250px Roboto, sans-serif; color: #3367d6; }

  .card { width: 546px; height: 633px; margin: 32px 0 0 31px; display: flex; flex-direction: column; border-radius: 5px; box-shadow: 0 1px 2px rgba(0, 0, 0, 0.4), 0 0 1px rgba(0, 0, 0, 0.3); }
  .card h2 { margin: 23px 0 0 40px; }
  .period { margin: 6px 0 0 40px; font-size: 17.500px; line-height: 22px; color: #757575; }
  .chart { margin: 374px 0 0 33px; font: 13.750px/16px 'Liberation Sans', sans-serif; color: #757575; }
  .axis { display: flex; align-items: center; gap: 9px; }
  .axis-line { width: 418px; height: 2px; background: #ebebeb; }
  .ticks { position: relative; height: 20px; }
  .tick { position: absolute; top: -1px; }
  .legend { margin: 24px 0 0 37px; display: flex; align-items: center; gap: 7px; height: 26px; }
  .legend i { width: 18px; height: 18px; border-radius: 50%; background: #4285f4; }
  .report { margin-top: auto; height: 58px; padding: 0 0 3px 19px; display: flex; align-items: center; gap: 14px; border-top: 1px solid #dadce0; }
  .report span { padding-top: 2px; }
  .main-sb { height: 768px; margin-left: auto; }

  .learn { flex: 1; padding-left: 20px; border-left: 1px solid #dadce0; }
  .learn-head { height: 61px; margin-left: -20px; padding: 4px 26px 0 21px; display: flex; align-items: center; border-bottom: 1px solid #dadce0; color: #5f6368; }
  .info { margin-top: 4px; }
  .close { margin: 4px 0 0 31px; }
  .learn-title { flex: 1; margin: -3px 0 0 16px; display: flex; flex-direction: column; }
  .learn-title small { font-size: 12.500px; line-height: 17px; color: #757575; }
  .learn-title strong { font-size: 17.500px; font-weight: 500; line-height: 20px; letter-spacing: 0.1px; color: #202124; }
  .learn h2 { height: 36px; padding-top: 10px; font-size: 22.500px; font-weight: 400; letter-spacing: 0.22px; color: #202124; }
  .tut { width: 335px; padding: 23px 0 15px; border-bottom: 1px solid #e4e4e4; }
  .tut:nth-of-type(2) { padding-top: 24px; }
  .tut:nth-of-type(4) { padding-top: 22px; }
  .tut a { display: block; font-size: 18px; line-height: 25px; color: #1967d2; text-decoration: none; }
  .tut p { margin-top: 10px; font-size: 15px; line-height: 20px; letter-spacing: 0.36px; color: #3c4043; }
  .learn :global(.ext) { display: inline-block; margin-left: 7px; }
  .docs { margin-top: 16px; line-height: 20px; color: #1967d2; }
  .docs a { color: #1967d2; }

  /* overlays */
  .next-step { position: absolute; left: 352px; top: 876px; display: flex; align-items: center; gap: 17px; font-size: 25px; font-weight: 500; line-height: 26px; }
  .next-step i { width: 25px; height: 25px; border-radius: 50%; background: #757575; }
  .status { position: absolute; left: 0; top: 863px; width: 618px; height: 26px; padding: 1px 0 0 5px; background: rgba(54, 54, 57, 0.96); border: 1px solid #5a5a5c; border-width: 1px 1px 0 0; color: #fbfbfe; font-size: 14.400px; line-height: 25px; }
  .cursor { position: absolute; left: 86px; top: 402px; }
  .watermark { position: absolute; left: 0; top: 422px; pointer-events: none; }
  .watermark text { font-family: 'Open Sans', 'Noto Sans', sans-serif; font-weight: 700; fill: #000; fill-opacity: 0.05; }

  /* taskbar */
  .taskbar { height: 50px; flex: none; display: flex; align-items: center; background: linear-gradient(90deg, #cfe5ec 0, #d0e5ee 45%, #d3ddea 75%, #d5dae9 100%); color: #111; }
  .start { width: 60px; padding-left: 20px; }
  .tb-search { width: 430px; height: 50px; padding-left: 14px; display: flex; align-items: center; gap: 15px; background: #fff; border: 1px solid #c8ccce; font-size: 18px; color: #333; }
  .apps { display: flex; height: 50px; margin-left: -1px; }
  .app { width: 62px; display: flex; align-items: center; justify-content: center; }
  .app.taskview { padding-right: 4px; }
  .app.current { background: #eaf4f8; border-bottom: 3px solid #0078d7; }
  .tray { margin-left: auto; width: 210px; display: grid; grid-template-columns: repeat(7, 30px); align-items: center; justify-items: center; }
  .lang, .clock { text-align: center; font-size: 14px; line-height: 22px; }
  .lang { width: 48px; }
  .clock { width: 85px; }
  .notif { margin: 0 25px 0 20px; }
  .peek { width: 5px; height: 50px; border-left: 1px solid #9aa3b0; }
</style>
